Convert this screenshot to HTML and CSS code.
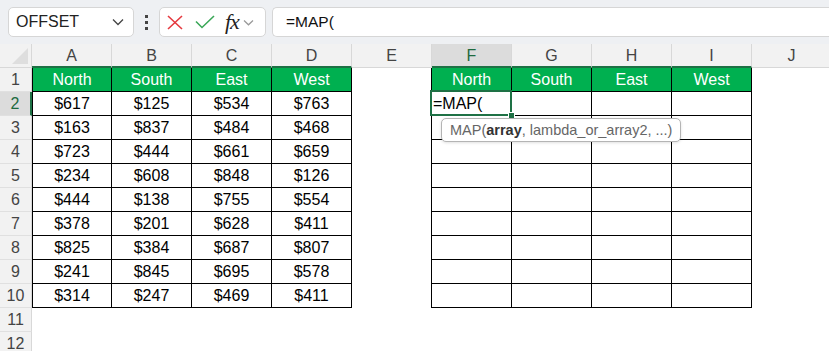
FILE: index.html
```html
<!DOCTYPE html>
<html lang="en">

<head>
  <meta charset="UTF-8">
  <meta name="viewport" content="width=device-width, initial-scale=1.0">
  <title>MAP</title>
  <link rel="stylesheet" href="styles.css">
</head>

<body>
  <div class="toolbar">
    <div class="name-box">
      <span>OFFSET</span>
      <svg width="12" height="8" viewBox="0 0 12 8"><path d="M1 1.5 L6 6.5 L11 1.5" fill="none" stroke="#444" stroke-width="1.3"/></svg>
    </div>
    <div class="grip"><i></i><i></i><i></i></div>
    <div class="fx-box">
      <svg class="cancel" width="16" height="15" viewBox="0 0 16 15"><path d="M1 1 L15 14 M15 1 L1 14" stroke="#e5393f" stroke-width="1.6"/></svg>
      <svg class="enter" width="20" height="14" viewBox="0 0 20 14"><path d="M1 6.5 L7 12.5 L19 1" fill="none" stroke="#3aa757" stroke-width="1.6"/></svg>
      <span class="fx">fx</span>
      <svg width="11" height="7" viewBox="0 0 11 7"><path d="M1 1.5 L5.5 5.8 L10 1.5" fill="none" stroke="#999" stroke-width="1.2"/></svg>
    </div>
    <div class="formula">=MAP(</div>
  </div>

  <div class="sheet" id="sheet"></div>

  <script>
    const cols = ['A', 'B', 'C', 'D', 'E', 'F', 'G', 'H', 'I', 'J']
    const heads = ['North', 'South', 'East', 'West']
    const data = [
      [617, 125, 534, 763],
      [163, 837, 484, 468],
      [723, 444, 661, 659],
      [234, 608, 848, 126],
      [444, 138, 755, 554],
      [378, 201, 628, 411],
      [825, 384, 687, 807],
      [241, 845, 695, 578],
      [314, 247, 469, 411]
    ]
    const sheet = document.querySelector('#sheet')

    function add(cls, text) {
      const d = document.createElement('div')
      d.className = cls
      if (text !== undefined) d.textContent = text
      sheet.appendChild(d)
      return d
    }

    //column letters
    add('corner')
    cols.forEach(function (c, i) {
      let cls = 'col-head'
      if (i < 4 || (i > 4 && i < 9)) cls += ' ref'
      if (c === 'F') cls += ' sel'
      add(cls, c)
    })

    for (let r = 1; r <= 12; r++) {
      add(r === 2 ? 'row-head sel' : 'row-head', r)
      for (let c = 0; c < 10; c++) {
        let cls = 'cell'
        let text = ''
        const inLeft = c < 4 && r <= 10
        const inRight = c > 4 && c < 9 && r <= 10
        if (inLeft || inRight) {
          cls += ' t'
          if (r === 1) {
            cls += ' hd'
            text = heads[inLeft ? c : c - 5]
          } else if (inLeft) {
            text = '$' + data[r - 2][c]
          }
        }
        if (c === 0 && r <= 10) cls += ' first'
        if (c === 4 && r <= 10) cls += ' edge'
        const cell = add(cls, text)
        if (r === 2 && c === 5) {
          cell.classList.add('active')
          cell.textContent = '=MAP('
          const tip = document.createElement('div')
          tip.className = 'tip'
          tip.innerHTML = 'MAP(<b>array</b>, lambda_or_array2, ...)'
          cell.appendChild(tip)
        }
      }
    }
  </script>
</body>

</html>
```

FILE: styles.css
```css
body {
  margin: 0;
  width: 829px;
  height: 351px;
  overflow: hidden;
  background-color: #fff;
  font-family: "Liberation Sans", Arial, sans-serif;
}

.toolbar {
  display: flex;
  align-items: center;
  height: 44px;
  padding: 7px 0 7px 8px;
  box-sizing: border-box;
  background-color: #eef0f3;
}

.name-box {
  display: flex;
  align-items: center;
  justify-content: space-between;
  width: 126px;
  height: 30px;
  padding: 0 9px 0 7px;
  box-sizing: border-box;
  background-color: #fff;
  border: 1px solid #d6d6d6;
  border-radius: 5px;
  font-size: 16px;
  color: #222;
}

.grip {
  display: flex;
  flex-direction: column;
  gap: 3px;
  margin: 0 11px 0 11px;
}

.grip i {
  display: block;
  width: 3px;
  height: 3px;
  background-color: #444;
}

.fx-box {
  display: flex;
  align-items: center;
  width: 107px;
  height: 30px;
  padding-left: 7px;
  box-sizing: border-box;
  background-color: #fff;
  border: 1px solid #d6d6d6;
  border-radius: 5px;
}

.fx-box .cancel {
  margin-right: 12px;
}

.fx-box .enter {
  margin-right: 10px;
}

.fx {
  margin-right: 4px;
  font-family: "Liberation Serif", serif;
  font-style: italic;
  font-size: 22px;
  line-height: 26px;
  color: #222;
  letter-spacing: -1px;
}

.formula {
  flex: 1;
  height: 30px;
  margin-left: 6px;
  padding-left: 13px;
  box-sizing: border-box;
  background-color: #fff;
  border: 1px solid #d6d6d6;
  border-right: none;
  border-radius: 5px 0 0 5px;
  font-size: 15.5px;
  line-height: 28px;
  color: #111;
}

.sheet {
  display: grid;
  grid-template-columns: 32px repeat(10, 80px);
  grid-auto-rows: 24px;
}

.corner,
.col-head,
.row-head {
  box-sizing: border-box;
  background-color: #f2f2f2;
  color: #444;
}

.corner {
  position: relative;
  border-right: 1px solid #d8d8d8;
  border-bottom: 1px solid #d8d8d8;
}

.corner::after {
  content: "";
  position: absolute;
  right: 3px;
  bottom: 3px;
  border-left: 16px solid transparent;
  border-bottom: 16px solid #dedede;
}

.col-head {
  border-right: 1px solid #d8d8d8;
  border-bottom: 1px solid #d8d8d8;
  text-align: center;
  font-size: 16px;
  line-height: 24px;
}

.col-head.ref {
  border-bottom: 2px solid #1e7145;
}

.col-head.sel {
  background-color: #dcdcdc;
  color: #1e6a3f;
}

.row-head {
  border-right: 1px solid #d8d8d8;
  border-bottom: 1px solid #e0e0e0;
  text-align: center;
  font-size: 16px;
  line-height: 24px;
}

.row-head.sel {
  background-color: #dcdcdc;
  color: #1e6a3f;
  border-right: 2px solid #1e7145;
}

.cell {
  box-sizing: border-box;
  text-align: center;
  font-size: 16px;
  line-height: 23px;
  color: #000;
}

.cell.t {
  border-right: 1px solid #000;
  border-bottom: 1px solid #000;
}

.cell.first {
  border-left: 1px solid #000;
}

.cell.edge {
  border-right: 1px solid #000;
}

.cell.hd {
  background-color: #00b050;
  color: #fff;
}

.cell.active {
  position: relative;
  text-align: left;
  padding-left: 1px;
}

.cell.active::after {
  content: "";
  position: absolute;
  top: -2px;
  left: -2px;
  width: 82px;
  height: 26px;
  box-sizing: border-box;
  border: 2px solid #1e7145;
}

.cell.active::before {
  content: "";
  position: absolute;
  right: -4px;
  bottom: -4px;
  width: 5px;
  height: 5px;
  background-color: #1e7145;
  border: 1px solid #fff;
  z-index: 2;
}

.tip {
  position: absolute;
  top: 26px;
  left: 9px;
  z-index: 3;
  padding: 0 8px;
  height: 24px;
  box-sizing: border-box;
  background-color: #fff;
  border: 1px solid #b4b4b4;
  border-radius: 5px;
  box-shadow: 0 1px 3px rgba(0, 0, 0, 0.12);
  white-space: nowrap;
  font-size: 14.5px;
  line-height: 22px;
  color: #666;
}

.tip b {
  color: #333;
}
```
